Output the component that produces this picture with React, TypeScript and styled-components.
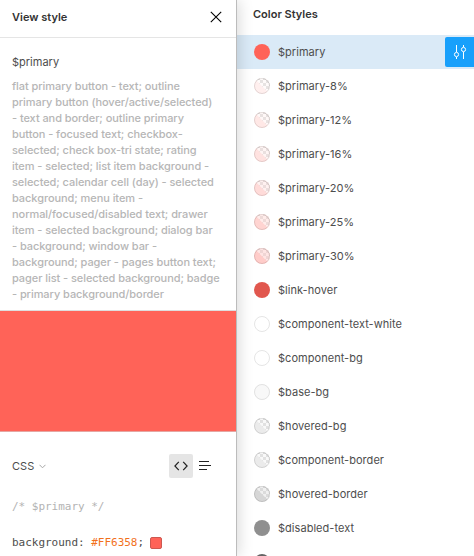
import React from 'react';
import styled, { createGlobalStyle } from 'styled-components';

const GlobalStyle = createGlobalStyle`
  * { box-sizing: border-box; }
  body {
    margin: 0;
    overflow: hidden;
    background: #fff;
    font-family: Inter, sans-serif;
    font-size: 11px;
    line-height: 16px;
    letter-spacing: 0.055px;
    color: #4d4d4d;
  }
`;

const Page = styled.div`
  display: flex;
  width: 474px;
  height: 556px;
  overflow: hidden;
`;

const Panel = styled.aside`
  position: relative;
  z-index: 1;
  flex: none;
  width: 237px;
  background: #fff;
  border-right: 1px solid #bcbcbc;
  box-shadow: 2px 0 14px rgba(0, 0, 0, 0.15);
`;

const PanelHeader = styled.header`
  display: flex;
  align-items: center;
  justify-content: space-between;
  height: 38px;
  padding: 0 14px 4px 12px;
  border-bottom: 1px solid #e5e5e5;
`;

const Title = styled.h2`
  margin: 0;
  font-size: 11px;
  font-weight: 600;
  letter-spacing: 0;
  color: #333;
`;

const Details = styled.section`
  height: 273px;
  padding: 16px 12px 0;
  border-bottom: 1px solid #dedede;
`;

const StyleName = styled.div`
  letter-spacing: 0;
`;

const Description = styled.p`
  margin: 8px 0 0;
  color: #b6b6b6;
  font-weight: 500;
  letter-spacing: -0.065px;
  white-space: pre;
`;

const Preview = styled.div`
  height: 121px;
  background: #ff6358;
  border-bottom: 1px solid #e5a6a2;
`;

const CodeBar = styled.div`
  display: flex;
  align-items: center;
  height: 24px;
  margin: 22px 19px 0 12px;
`;

const Language = styled.div`
  display: flex;
  flex: 1;
  align-items: center;
  gap: 5px;
`;

const ViewButton = styled.button<{ $active?: boolean }>`
  display: flex;
  align-items: center;
  justify-content: center;
  width: 24px;
  height: 24px;
  padding: 0;
  border: 0;
  border-radius: 2px;
  background: ${(p) => (p.$active ? '#e5e5e5' : 'transparent')};
`;

const Code = styled.pre`
  margin: 20px 0 0 12px;
  font-family: 'DejaVu Sans Mono', monospace;
  font-size: 11px;
  line-height: 18px;
  letter-spacing: -0.02px;
`;

const CodeLine = styled.div`
  display: flex;
  align-items: center;
  height: 18px;
  margin-bottom: 18px;
`;

const Comment = styled.span`
  color: #b3b3b3;
`;

const HexValue = styled.span`
  color: #f2711c;
`;

const ColorChip = styled.span`
  width: 12px;
  height: 12px;
  margin-left: 6px;
  border: 1px solid #cd5850;
  border-radius: 2px;
  background: #ff6358;
`;

const Styles = styled.main`
  flex: 1;
  min-width: 0;
`;

const StylesHeader = styled.header`
  height: 35px;
  padding: 6px 16px;
`;

const StyleRow = styled.div<{ $selected?: boolean }>`
  display: flex;
  align-items: center;
  gap: 8px;
  height: 34px;
  padding-left: 17px;
  background: ${(p) => (p.$selected ? '#daeaf7' : 'transparent')};
`;

const Label = styled.span`
  flex: 1;
  letter-spacing: 0.04px;
`;

const EditButton = styled.button`
  display: flex;
  align-items: center;
  width: 29px;
  height: 30px;
  padding: 0 0 0 7px;
  border: 0;
  border-radius: 2px 0 0 2px;
  background: #18a0fb;
`;

type Swatch = { name: string; color: string; alpha?: number; ring?: string };

const swatches: Swatch[] = [
  { name: '$primary', color: '#ff6358' },
  { name: '$primary-8%', color: '#ffefee', alpha: 0.08 },
  { name: '$primary-12%', color: '#ffe8e6', alpha: 0.12 },
  { name: '$primary-16%', color: '#ffe2e0', alpha: 0.16 },
  { name: '$primary-20%', color: '#ffdbd9', alpha: 0.2 },
  { name: '$primary-25%', color: '#ffd4d1', alpha: 0.25 },
  { name: '$primary-30%', color: '#ffccc9', alpha: 0.3 },
  { name: '$link-hover', color: '#e1574e' },
  { name: '$component-text-white', color: '#fff', ring: '#e5e5e5' },
  { name: '$component-bg', color: '#fff', ring: '#e5e5e5' },
  { name: '$base-bg', color: '#f8f8f8', ring: '#e2e2e2' },
  { name: '$hovered-bg', color: '#ebebeb', alpha: 0.08 },
  { name: '$component-border', color: '#ebebeb', alpha: 0.08 },
  { name: '$hovered-border', color: '#d6d6d6', alpha: 0.16 },
  { name: '$disabled-text', color: '#8f8f8f' },
  { name: '', color: '#656565' },
];

const SwatchIcon = ({ swatch, id }: { swatch: Swatch; id: string }) => (
  <svg width="16" height="16" viewBox="0 0 16 16">
    <defs>
      <clipPath id={`${id}-disc`}>
        <circle cx="8" cy="8" r="8" />
      </clipPath>
      <pattern id={`${id}-check`} x="6" y="2" width="6" height="6" patternUnits="userSpaceOnUse">
        <rect width="6" height="6" fill="#fff" />
        <path d="M0 0h3v3H0zM3 3h3v3H3z" fill="#dedede" />
      </pattern>
    </defs>
    <g clipPath={`url(#${id}-disc)`}>
      <rect width="16" height="16" fill={swatch.color} />
      {swatch.alpha !== undefined && (
        <>
          <path d="M0 0H16V16Z" fill={`url(#${id}-check)`} />
          <path d="M0 0H16V16Z" fill={swatch.color} opacity={0.2 + swatch.alpha} />
        </>
      )}
    </g>
    {(swatch.ring || swatch.alpha !== undefined) && (
      <circle cx="8" cy="8" r="7.5" fill="none" stroke={swatch.ring ?? 'rgba(0,0,0,.11)'} />
    )}
  </svg>
);

const CloseIcon = () => (
  <svg width="12" height="12" viewBox="0 0 12 12" fill="none" stroke="#000" strokeWidth="1.1">
    <path d="M.8 .8 11.2 11.2M11.2 .8 .8 11.2" />
  </svg>
);

const ChevronIcon = () => (
  <svg width="7" height="5" viewBox="0 0 7 5" fill="none" stroke="#a6a6a6">
    <path d="M.5 .8 3.5 3.8 6.5 .8" />
  </svg>
);

const CodeIcon = () => (
  <svg width="14" height="10" viewBox="0 0 14 10" fill="none" stroke="#222" strokeWidth="1.2">
    <path d="M4.8 .8 .9 5 4.8 9.2M9.2 .8 13.1 5 9.2 9.2" />
  </svg>
);

const ListIcon = () => (
  <svg width="12" height="10" viewBox="0 0 12 10" fill="none" stroke="#222">
    <path d="M0 .5H10M0 4.5H12M0 8.5H8" />
  </svg>
);

const SlidersIcon = () => (
  <svg width="16" height="16" viewBox="0 0 16 16" fill="none" stroke="#fff">
    <path d="M4.5 1v7M4.5 13v2M11.5 1v2M11.5 8v7" />
    <circle cx="4.5" cy="10.5" r="2.1" />
    <circle cx="11.5" cy="5.5" r="2.1" />
  </svg>
);

const description = `flat primary button - text; outline
primary button (hover/active/selected)
- text and border; outline primary
button - focused text; checkbox-
selected; check box-tri state; rating
item - selected; list item background -
selected; calendar cell (day) - selected
background; menu item -
normal/focused/disabled text; drawer
item - selected background; dialog bar
- background; window bar -
background; pager - pages button text;
pager list - selected background; badge
- primary background/border`;

export default function App() {
  return (
    <>
      <GlobalStyle />
      <Page>
        <Panel>
          <PanelHeader>
            <Title>View style</Title>
            <CloseIcon />
          </PanelHeader>
          <Details>
            <StyleName>$primary</StyleName>
            <Description>{description}</Description>
          </Details>
          <Preview />
          <CodeBar>
            <Language>
              CSS
              <ChevronIcon />
            </Language>
            <ViewButton $active aria-label="Code">
              <CodeIcon />
            </ViewButton>
            <ViewButton aria-label="Table">
              <ListIcon />
            </ViewButton>
          </CodeBar>
          <Code>
            <CodeLine>
              <Comment>{'/* $primary */'}</Comment>
            </CodeLine>
            <CodeLine>
              <span>
                background: <HexValue>#FF6358</HexValue>;
              </span>
              <ColorChip />
            </CodeLine>
          </Code>
        </Panel>
        <Styles>
          <StylesHeader>
            <Title>Color Styles</Title>
          </StylesHeader>
          {swatches.map((swatch, i) => (
            <StyleRow key={i} $selected={i === 0}>
              <SwatchIcon swatch={swatch} id={`swatch-${i}`} />
              <Label>{swatch.name}</Label>
              {i === 0 && (
                <EditButton aria-label="Edit style">
                  <SlidersIcon />
                </EditButton>
              )}
            </StyleRow>
          ))}
        </Styles>
      </Page>
    </>
  );
}
